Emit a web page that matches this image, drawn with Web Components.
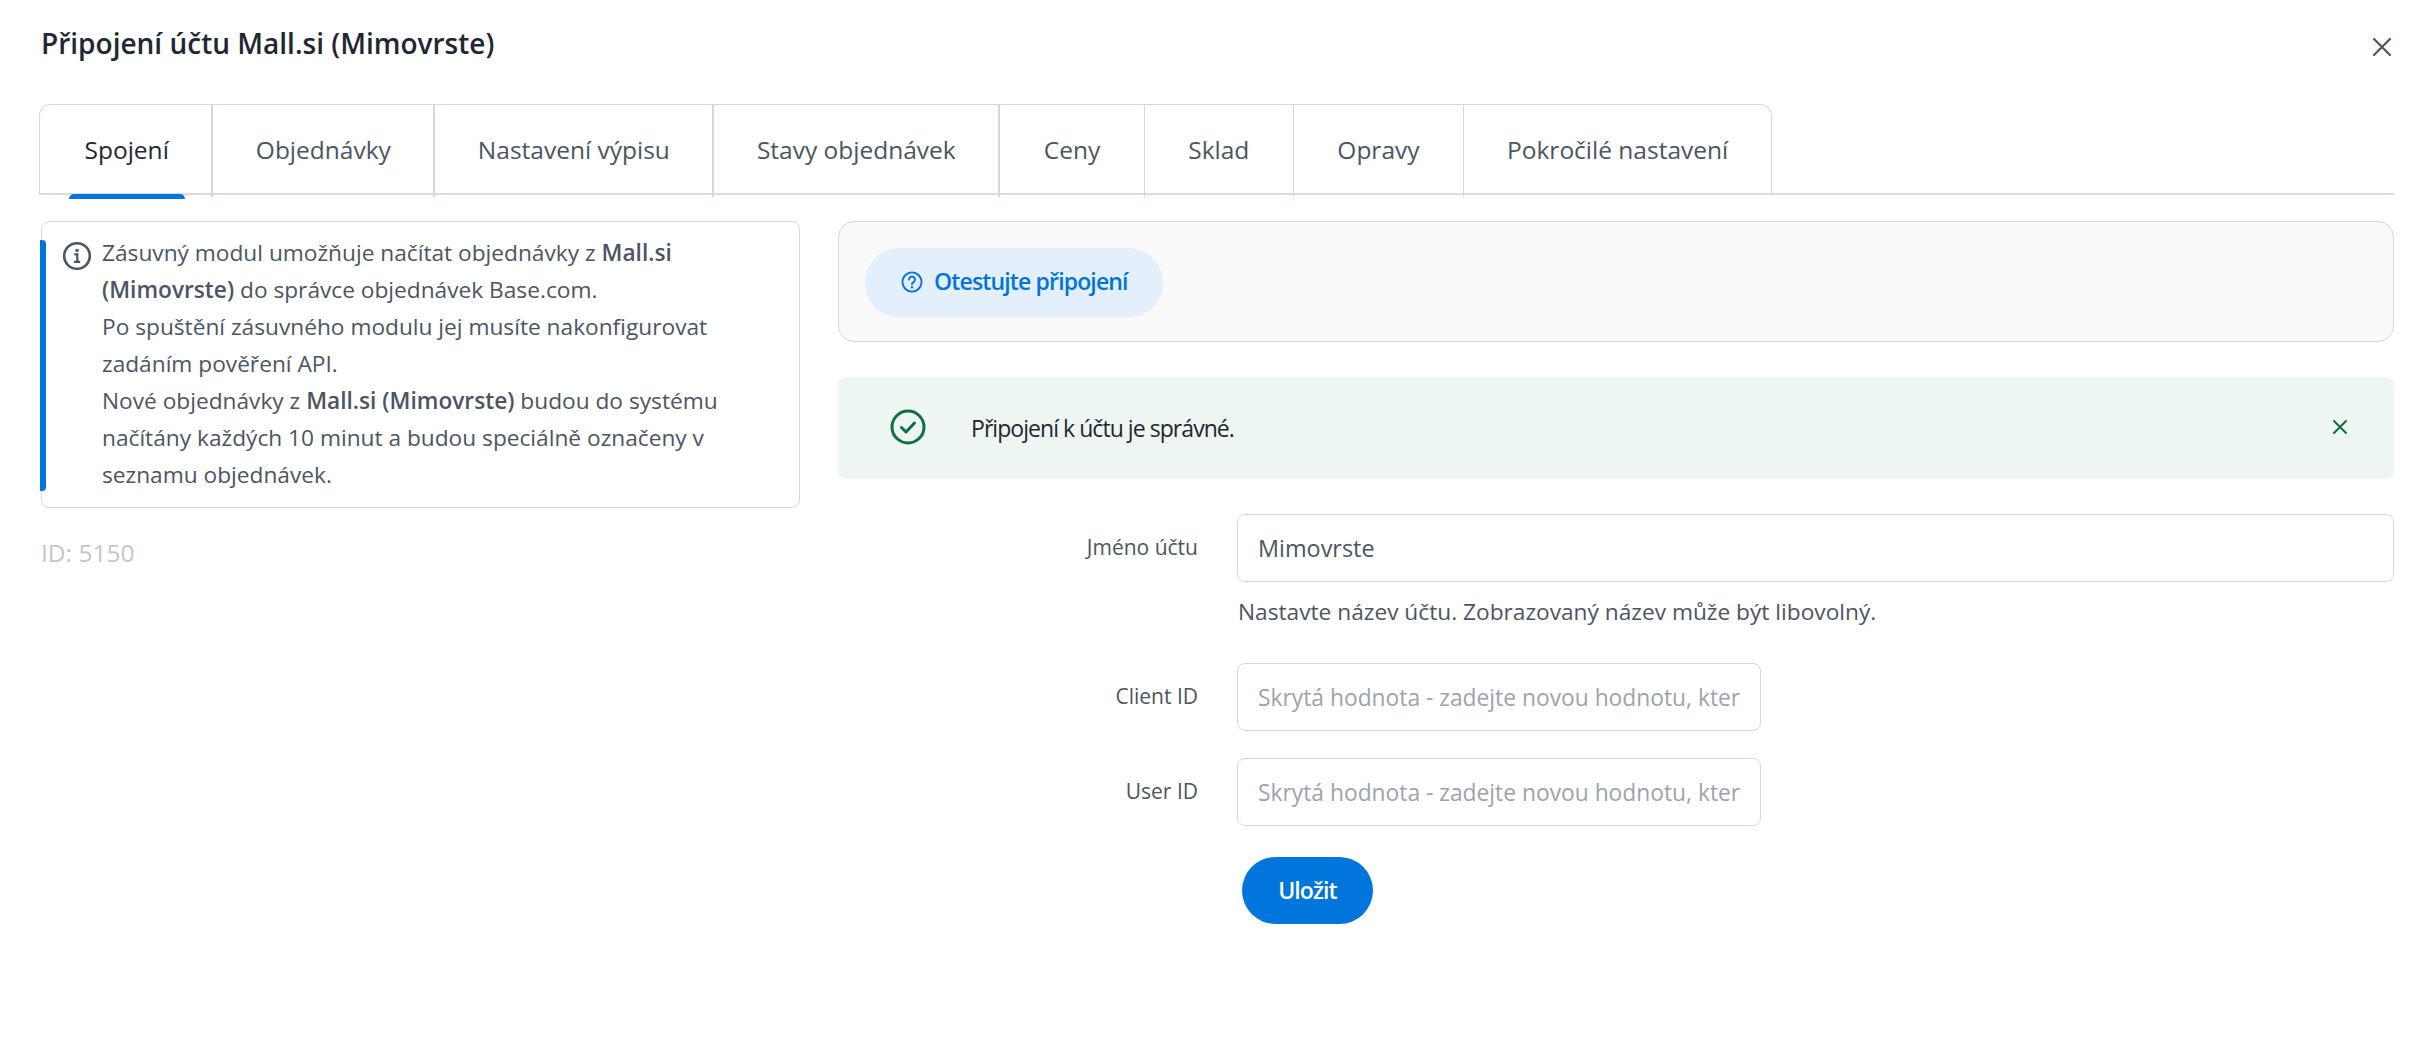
<!DOCTYPE html>
<html lang="cs"><head><meta charset="utf-8"><title>Připojení účtu</title>
<style>
html,body{margin:0;padding:0;background:#fff;font-family:"Open Sans","Noto Sans",sans-serif;color:#4b5563}
</style></head><body>
<x-modal>
  <span slot="title">Připojení účtu Mall.si (Mimovrste)</span>
  <x-tabs slot="tabs">
    <x-tab active>Spojení</x-tab><x-tab>Objednávky</x-tab><x-tab>Nastavení výpisu</x-tab><x-tab>Stavy objednávek</x-tab><x-tab thin>Ceny</x-tab><x-tab thin>Sklad</x-tab><x-tab thin>Opravy</x-tab><x-tab last>Pokročilé nastavení</x-tab>
  </x-tabs>
  <x-info slot="side" note="ID: 5150">
    Zásuvný modul umožňuje načítat objednávky z <b>Mall.si (Mimovrste)</b> do správce objednávek Base.com.<br>
    Po spuštění zásuvného modulu jej musíte nakonfigurovat zadáním pověření API.<br>
    Nové objednávky z <b>Mall.si (Mimovrste)</b> budou do systému načítány každých 10 minut a budou speciálně označeny v seznamu objednávek.
  </x-info>
  <x-test-panel>Otestujte připojení</x-test-panel>
  <x-alert>Připojení k účtu je správné.</x-alert>
  <x-field label="Jméno účtu" value="Mimovrste" help="Nastavte název účtu. Zobrazovaný název může být libovolný." wide></x-field>
  <x-field label="Client ID" placeholder="Skrytá hodnota - zadejte novou hodnotu, kter"></x-field>
  <x-field label="User ID" placeholder="Skrytá hodnota - zadejte novou hodnotu, kter"></x-field>
  <x-save>Uložit</x-save>
</x-modal>
<script>
function def(name, html, init){
  customElements.define(name, class extends HTMLElement{
    constructor(){super();this.attachShadow({mode:'open'}).innerHTML=html;}
    connectedCallback(){ if(init) init(this); }
  });
}
const BORDER='#d3d7de';
def('x-modal',`<style>
:host{display:block;box-sizing:border-box;width:2430px;padding:0 36px 0 40px}
header{display:flex;justify-content:space-between;align-items:center;height:104px;padding-bottom:19px;box-sizing:border-box}
.t{font-size:28px;font-weight:600;color:#1f2733;line-height:1;margin-left:1px}
svg{display:block;margin-right:2px;margin-top:9px}
.main{display:grid;grid-template-columns:760px 1fr;column-gap:38px;margin-top:26px}
.r{display:flex;flex-direction:column;min-width:0}
</style>
<header><div class="t"><slot name="title"></slot></div>
<svg width="20" height="20" viewBox="0 0 20 20" fill="none" stroke="#4b5563" stroke-width="2.2" stroke-linecap="round"><path d="M2 2 18 18M18 2 2 18"/></svg></header>
<slot name="tabs"></slot>
<div class="main"><div><slot name="side"></slot></div><div class="r"><slot></slot></div></div>`);
def('x-tabs',`<style>
:host{display:flex;margin-left:-1px;border-bottom:2px solid #d9dce2;height:91px;box-sizing:border-box}
.w{display:flex;border:1px solid ${BORDER};border-bottom:0;border-radius:12px 12px 0 0;height:91px;box-sizing:border-box}
</style><div class="w"><slot></slot></div>`);
def('x-tab',`<style>
:host{display:flex;align-items:center;box-sizing:border-box;height:92px;padding:0 42.5px 4px;font-size:24.5px;color:#4b5563;position:relative;border-right:2px solid ${BORDER};white-space:nowrap}
:host([thin]){border-right-width:1px;padding:0 43.5px 4px}
:host([last]){border-right:0;padding:0 43px 4px}
:host([active]){color:#1f2733;padding:0 42.5px 4px 44.5px}
:host([active])::after{content:"";position:absolute;left:29px;right:26px;bottom:-2px;height:5px;background:#0075db;border-radius:5px 5px 0 0}
</style><slot></slot>`);
def('x-info',`<style>
:host{display:block;margin-left:1px}
.c{position:relative;border:1px solid ${BORDER};border-radius:8px;padding:12px 30px 6px 60px;font-size:22.7px;line-height:37px;color:#4b5563;height:287px;box-sizing:border-box}
.c::before{content:"";position:absolute;left:-2px;top:18px;bottom:16px;width:6px;background:#0075db;border-radius:0 4px 4px 0}
svg{position:absolute;left:20px;top:19px}
::slotted(b){font-weight:600}
.n{margin-top:28px;font-size:24.5px;color:#c2c6cd;line-height:33px}
</style><div class="c"><svg width="30" height="30" viewBox="0 0 30 30" fill="none" stroke="#4b5563"><circle cx="15" cy="15" r="12.8" stroke-width="2.6"/><path d="M12.3 13.4h3v7.2M12 20.8h6.2" stroke-width="2.2"/><circle cx="15" cy="9.4" r="1.7" fill="#4b5563" stroke="none"/></svg><slot></slot></div><div class="n"></div>`,
el=>{el.shadowRoot.querySelector('.n').textContent=el.getAttribute('note');});
def('x-test-panel',`<style>
:host{display:block;box-sizing:border-box;height:121px;background:#fafafa;border:1px solid ${BORDER};border-radius:16px;padding:26px}
.b{display:inline-flex;align-items:center;box-sizing:border-box;height:69px;width:298px;padding-left:36px;gap:11px;border-radius:35px;background:#e3effb;color:#0075db;font-size:23px;letter-spacing:-.85px;font-weight:600;box-shadow:0 1px 2px rgba(0,0,0,.03)}
svg{display:block;flex:none;margin-top:-1px}
span{display:block;margin-top:-3px}
</style><div class="b"><svg width="22" height="22" viewBox="0 0 22 22" fill="none" stroke="#0075db"><circle cx="11" cy="11" r="9.6" stroke-width="1.9"/><path d="M8 8.6a3 3 0 1 1 4.7 2.4c-1 .7-1.7 1.1-1.7 2.2" stroke-width="1.9" stroke-linecap="round"/><circle cx="11" cy="16.2" r="1.2" fill="#0075db" stroke="none"/></svg><span><slot></slot></span></div>`);
def('x-alert',`<style>
:host{display:flex;align-items:center;box-sizing:border-box;height:102px;margin-top:35px;background:#edf6f1;border-radius:8px;padding:0 46px 0 52px;color:#1f2733;font-size:23px;letter-spacing:-.95px}
svg{display:block;flex:none;margin-top:-2px}
.x{flex:1;margin-left:45px;padding-bottom:1px}
</style><svg width="36" height="36" viewBox="0 0 36 36" fill="none" stroke="#0e7042" stroke-width="3"><circle cx="18" cy="18" r="16"/><path d="M11.5 18.5 16 23l8.5-9" stroke-linecap="round" stroke-linejoin="round"/></svg><div class="x"><slot></slot></div><svg width="16" height="16" viewBox="0 0 16 16" fill="none" stroke="#0e7042" stroke-width="2" stroke-linecap="round"><path d="M2 2l12 12M14 2 2 14"/></svg>`);
def('x-field',`<style>
:host{display:grid;grid-template-columns:399px 1fr;margin-top:27px}
:host([wide]){margin-top:35px}
.l{text-align:right;padding-right:39px;height:68px;display:flex;align-items:center;justify-content:flex-end;font-size:21px;color:#4b5563;box-sizing:border-box;padding-bottom:2px}
.i{box-sizing:border-box;height:68px;width:524px;border:1.5px solid ${BORDER};border-radius:8px;background:#fff;display:flex;align-items:center;padding:0 20px;font-size:23.4px;overflow:hidden;white-space:nowrap;color:#4b5563}
:host([wide]) .i{width:auto}
.i.p{color:#9ca3af;font-size:22.8px}
.h{font-size:22.7px;color:#4b5563;margin-top:12px;line-height:36px;margin-bottom:6px;height:36px;margin-left:1px}
.h:empty{display:none}
</style><div class="l"></div><div><div class="i"></div><div class="h"></div></div>`,
el=>{const s=el.shadowRoot;s.querySelector('.l').textContent=el.getAttribute('label');
 const i=s.querySelector('.i');const v=el.getAttribute('value');
 if(v){i.textContent=v}else{i.textContent=el.getAttribute('placeholder');i.classList.add('p')}
 s.querySelector('.h').textContent=el.getAttribute('help')||'';});
def('x-save',`<style>
:host{display:block;padding-left:404px;margin-top:31px}
.b{display:flex;align-items:center;justify-content:center;box-sizing:border-box;width:131px;height:67px;padding-bottom:2px;border-radius:34px;background:#0075db;color:#fff;font-size:23px;letter-spacing:-.9px;font-weight:600}
</style><div class="b"><slot></slot></div>`);
</script>
</body></html>
